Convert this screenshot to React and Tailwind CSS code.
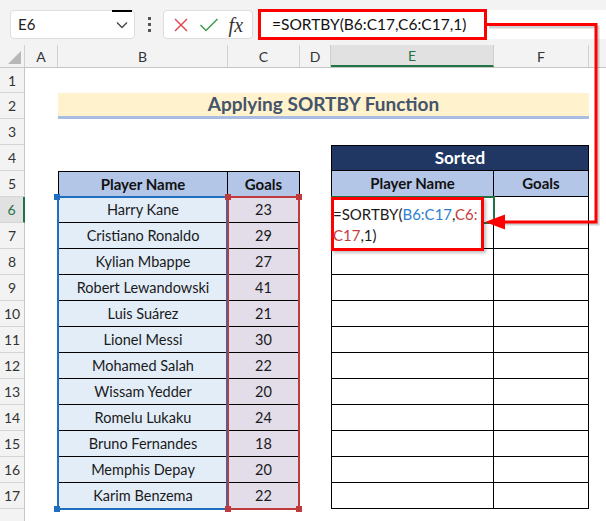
import React from "react";

const players = [
  ["Harry Kane", 23],
  ["Cristiano Ronaldo", 29],
  ["Kylian Mbappe", 27],
  ["Robert Lewandowski", 41],
  ["Luis Suárez", 21],
  ["Lionel Messi", 30],
  ["Mohamed Salah", 22],
  ["Wissam Yedder", 20],
  ["Romelu Lukaku", 24],
  ["Bruno Fernandes", 18],
  ["Memphis Depay", 20],
  ["Karim Benzema", 22],
];

function RowHead({ n, active }) {
  return (
    <div
      className={
        active
          ? "w-[25px] shrink-0 bg-[#e1e1e1] border-r-2 border-r-[#217346] border-b border-b-[#d4d4d4] flex items-center justify-center text-[14px] text-[#217346]"
          : "w-[25px] shrink-0 bg-[#f3f3f3] border-r border-r-[#c6c6c6] border-b border-b-[#d4d4d4] flex items-center justify-center text-[14px] text-[#333]"
      }
    >
      {n}
    </div>
  );
}

function Toolbar() {
  return (
    <div className="h-[45px] bg-[#f3f3f3] flex items-start pt-[10px] pl-[10px]">
      <div className="relative w-[125px] h-[29px] bg-white rounded-[4px] border border-[#dedede] flex items-center justify-between pl-[7px] pr-[6px]">
        <div className="absolute -top-[1px] right-[2px] w-[20px] h-[2px] bg-black" />
        <span className="text-[15px] text-[#222]">E6</span>
        <svg width="12" height="8" viewBox="0 0 12 8">
          <polyline points="1,1.5 6,6.5 11,1.5" fill="none" stroke="#444" strokeWidth="1.3" />
        </svg>
      </div>
      <div className="w-[28px] h-[29px] flex flex-col items-center justify-center gap-[3px]">
        <div className="w-[3px] h-[3px] bg-[#555]" />
        <div className="w-[3px] h-[3px] bg-[#555]" />
        <div className="w-[3px] h-[3px] bg-[#555]" />
      </div>
      <div className="w-[90px] h-[29px] bg-white rounded-[4px] border border-[#dedede] flex items-center justify-around px-[4px]">
        <svg width="16" height="16" viewBox="0 0 16 16">
          <line x1="2" y1="2" x2="14" y2="14" stroke="#e0474c" strokeWidth="1.4" />
          <line x1="14" y1="2" x2="2" y2="14" stroke="#e0474c" strokeWidth="1.4" />
        </svg>
        <svg width="20" height="16" viewBox="0 0 20 16">
          <polyline points="1.5,8 7,13.5 18.5,2" fill="none" stroke="#3f9b4e" strokeWidth="1.5" />
        </svg>
        <span className="text-[20px] italic text-[#333] leading-none" style={{ fontFamily: "'Liberation Serif', serif" }}>
          fx
        </span>
      </div>
      <div className="ml-[5px] flex-1 h-[29px] bg-white rounded-l-[4px] flex items-start">
        <div className="w-[229px] h-[31px] -mt-[1px] border-[3px] border-[#ff0000] flex items-center pl-[11px] text-[15.5px] text-[#111]">
          =SORTBY(B6:C17,C6:C17,1)
        </div>
      </div>
    </div>
  );
}

function ColHeads() {
  const cell = "h-full border-r border-[#d0d0d0] flex items-center justify-center text-[14px] text-[#333]";
  return (
    <div className="h-[23px] flex bg-[#f3f3f3] border-b border-[#c6c6c6]">
      <div className="w-[25px] border-r border-[#d0d0d0] relative">
        <svg className="absolute right-[3px] bottom-[3px]" width="13" height="13" viewBox="0 0 13 13">
          <polygon points="13,0 13,13 0,13" fill="#b8b8b8" />
        </svg>
      </div>
      <div className={"w-[33px] " + cell}>A</div>
      <div className={"w-[170px] " + cell}>B</div>
      <div className={"w-[72px] " + cell}>C</div>
      <div className={"w-[31px] " + cell}>D</div>
      <div className="w-[163px] h-full border-r border-[#d0d0d0] border-b-2 border-b-[#217346] bg-[#e1e1e1] flex items-center justify-center text-[14px] text-[#217346]">
        E
      </div>
      <div className={"w-[95px] " + cell}>F</div>
      <div className="w-[17px]" />
    </div>
  );
}

export default function App() {
  const cellText = "flex items-center justify-center text-[14.5px] text-[#1a1a1a]";
  const headText = "flex items-center justify-center text-[15px] font-bold text-[#111]";
  return (
    <div
      className="relative w-[606px] h-[521px] overflow-hidden bg-white"
      style={{ fontFamily: "Lato, 'Noto Sans', sans-serif" }}
    >
      <Toolbar />
      <ColHeads />

      {/* row 1 */}
      <div className="flex h-[25px]">
        <RowHead n={1} />
      </div>

      {/* row 2 title */}
      <div className="flex h-[26px]">
        <RowHead n={2} />
        <div className="w-[33px]" />
        <div className="w-[531px] bg-[#fff2cc] border-b-[3px] border-[#a9bde3] flex items-center justify-center text-[19px] font-bold text-[#44546a]">
          Applying SORTBY Function
        </div>
      </div>

      {/* row 3 */}
      <div className="flex h-[26px]">
        <RowHead n={3} />
      </div>

      {/* row 4 */}
      <div className="flex h-[26px]">
        <RowHead n={4} />
        <div className="w-[306px]" />
        <div className="w-[258px] bg-[#203764] border border-black flex items-center justify-center text-[17px] font-bold text-white">
          Sorted
        </div>
      </div>

      {/* row 5 headers */}
      <div className="flex h-[26px]">
        <RowHead n={5} />
        <div className="w-[33px]" />
        <div className={"w-[170px] bg-[#b4c6e7] border border-black " + headText}>Player Name</div>
        <div className={"w-[72px] bg-[#b4c6e7] border-y border-r border-black " + headText}>Goals</div>
        <div className="w-[31px]" />
        <div className={"w-[163px] bg-[#b4c6e7] border-l border-r border-b border-black " + headText}>Player Name</div>
        <div className={"w-[95px] bg-[#b4c6e7] border-r border-b border-black " + headText}>Goals</div>
      </div>

      {players.map(([name, goals], i) => (
        <div key={name} className="flex h-[26px]">
          <RowHead n={i + 6} active={i === 0} />
          <div className="w-[33px]" />
          <div className={"w-[170px] bg-[#e2edf8] border-l border-r border-b border-black " + cellText}>{name}</div>
          <div className={"w-[72px] bg-[#e3dde9] border-r border-b border-black " + cellText}>{goals}</div>
          <div className="w-[31px]" />
          <div className="w-[163px] border-l border-r border-b border-black" />
          <div className="w-[95px] border-r border-b border-black" />
        </div>
      ))}

      {/* row 18 */}
      <div className="flex h-[26px]">
        <RowHead n="" />
      </div>

      {/* reference highlights */}
      <div className="absolute left-[57px] top-[196px] w-[171px] h-[314px] border-2 border-[#1f6fc1]" />
      <div className="absolute left-[227px] top-[196px] w-[73px] h-[314px] border-2 border-[#c0393b]" />
      <div className="absolute left-[54px] top-[194px] w-[6px] h-[6px] bg-[#1f6fc1]" />
      <div className="absolute left-[54px] top-[506px] w-[6px] h-[6px] bg-[#1f6fc1]" />
      <div className="absolute left-[225px] top-[194px] w-[6px] h-[6px] bg-[#c0393b]" />
      <div className="absolute left-[296px] top-[194px] w-[6px] h-[6px] bg-[#c0393b]" />
      <div className="absolute left-[225px] top-[506px] w-[6px] h-[6px] bg-[#c0393b]" />
      <div className="absolute left-[296px] top-[506px] w-[6px] h-[6px] bg-[#c0393b]" />

      {/* active cell E6 */}
      <div className="absolute left-[331px] top-[196px] w-[164px] h-[28px] border-2 border-[#217346]" />

      {/* edited formula in E6 */}
      <div className="absolute left-[331px] top-[197px] w-[153px] h-[54px] bg-white border-[3px] border-[#ff0000] shadow-[2px_2px_3px_rgba(0,0,0,0.25)] pt-[4px] text-[15px] leading-[21px] text-[#1a1a1a]">
        <div className="-ml-[1px]">
          =SORTBY(<span className="text-[#2f80d1]">B6:C17</span>,<span className="text-[#c63c3c]">C6:</span>
        </div>
        <div className="-ml-[1px]">
          <span className="text-[#c63c3c]">C17</span>,1)
        </div>
      </div>

      {/* arrow */}
      <svg className="absolute inset-0 pointer-events-none" width="606" height="521" viewBox="0 0 606 521">
        <polyline points="489,27 598,27 598,224 505,224" fill="none" stroke="rgba(0,0,0,0.18)" strokeWidth="3" />
        <polyline points="487,24.5 596,24.5 596,222 503,222" fill="none" stroke="#ff0000" strokeWidth="3" />
        <polygon points="485,222 505,214.5 505,229.5" fill="#ff0000" />
      </svg>
    </div>
  );
}
